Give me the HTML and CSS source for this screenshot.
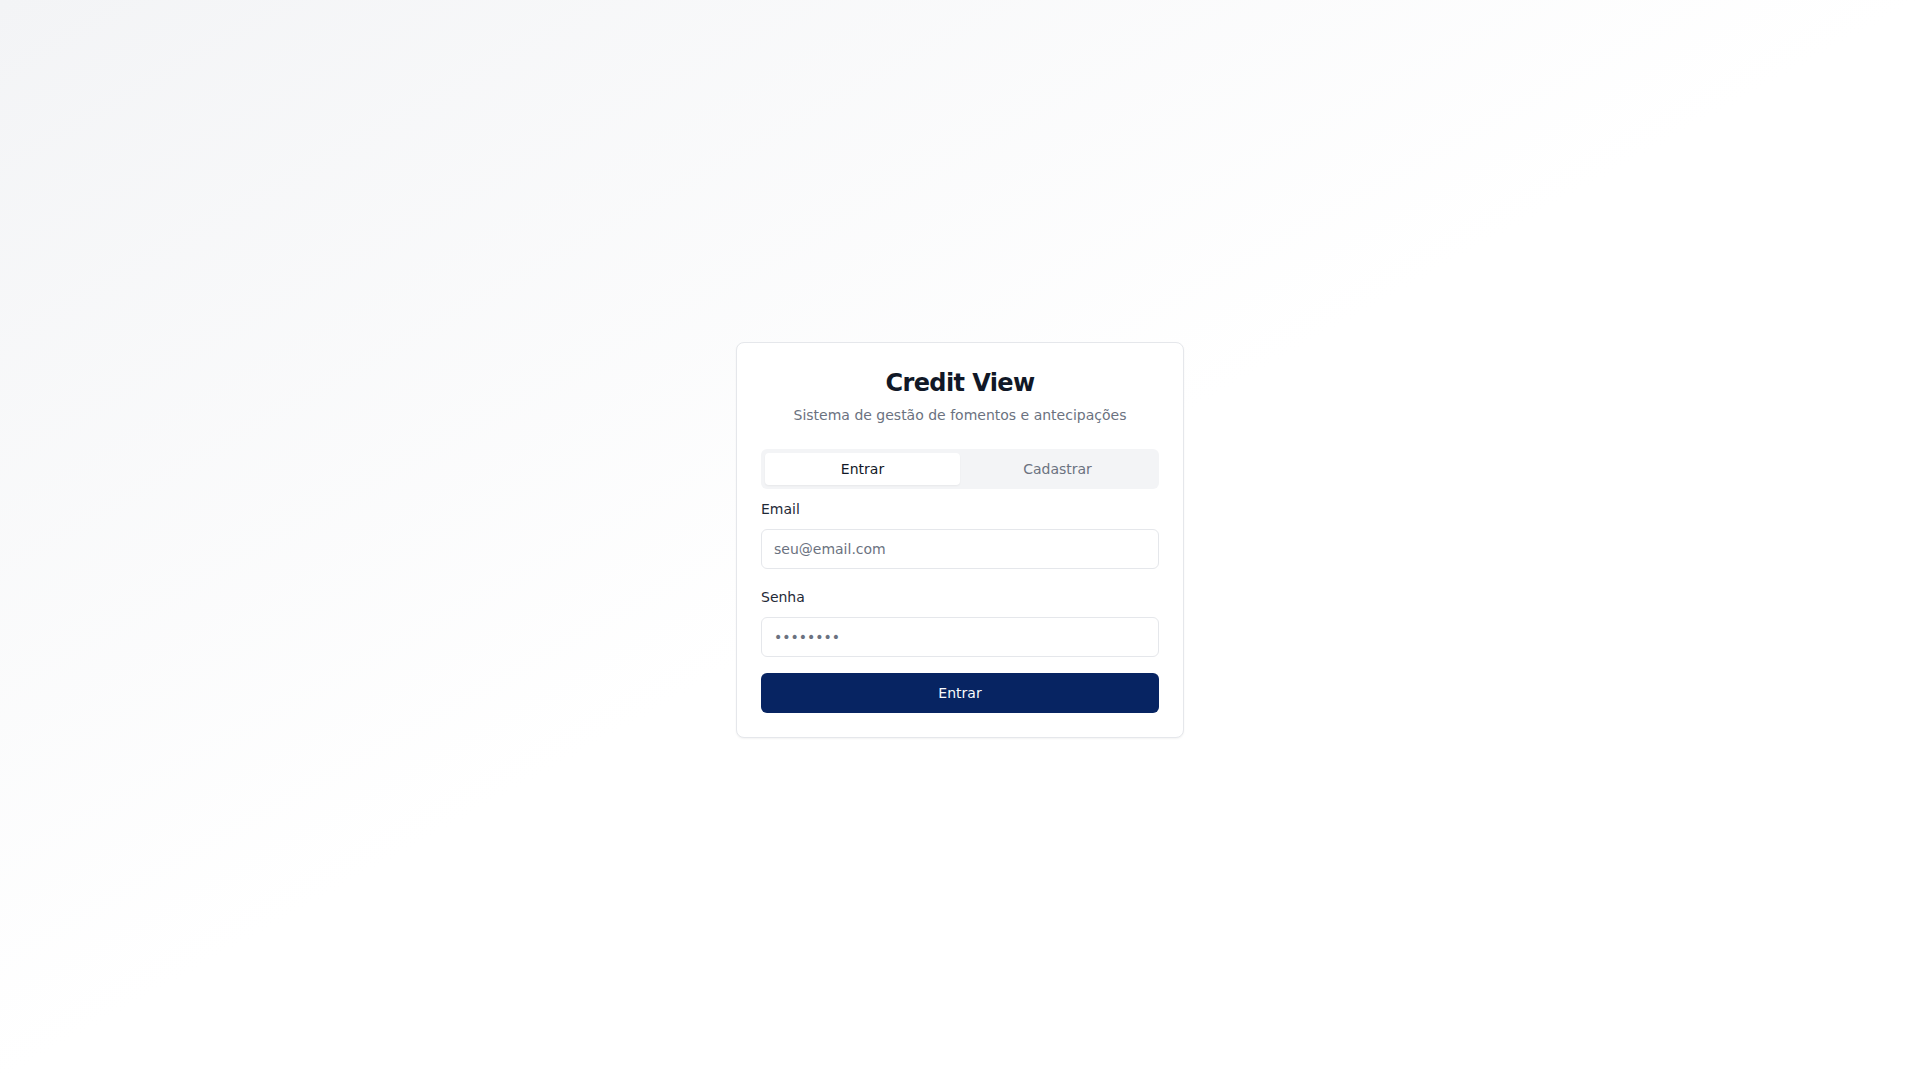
FILE: index.html
```html
<!DOCTYPE html>
<html lang="pt-BR">
<head>
<meta charset="utf-8">
<title>Credit View</title>
<link rel="stylesheet" href="styles.css">
</head>
<body>
<main class="page">
  <div class="card">
    <div class="card-header">
      <h1 class="title">Credit View</h1>
      <p class="subtitle">Sistema de gestão de fomentos e antecipações</p>
    </div>
    <div class="card-content">
      <div class="tabs">
        <button class="tab tab-active" type="button">Entrar</button>
        <button class="tab" type="button">Cadastrar</button>
      </div>
      <form class="form">
        <div class="field">
          <label for="email">Email</label>
          <input id="email" class="input" type="email" placeholder="seu@email.com">
        </div>
        <div class="field">
          <label for="senha">Senha</label>
          <input id="senha" class="input" type="password" placeholder="••••••••">
        </div>
        <button class="submit" type="button">Entrar</button>
      </form>
    </div>
  </div>
</main>
</body>
</html>
```
FILE: styles.css
```css
* {
  box-sizing: border-box;
}

html, body {
  margin: 0;
  padding: 0;
}

body {
  font-family: "DejaVu Sans", "Noto Sans", sans-serif;
  font-size: 16px;
  line-height: 1.5;
  color: #111827;
}

.page {
  min-height: 100vh;
  display: flex;
  align-items: center;
  justify-content: center;
  background: linear-gradient(to bottom right, #f3f4f6 0%, #ffffff 50%, #ffffff 100%);
}

.card {
  width: 448px;
  background: #ffffff;
  border: 1px solid #e5e7eb;
  border-radius: 8px;
  box-shadow: 0 1px 2px 0 rgba(0, 0, 0, 0.05);
}

.card-header {
  padding: 24px;
  display: flex;
  flex-direction: column;
  gap: 6px;
  text-align: center;
}

.title {
  margin: 0;
  font-size: 24px;
  line-height: 32px;
  font-weight: 700;
  color: #111827;
  letter-spacing: -0.025em;
}

.subtitle {
  margin: 0;
  font-size: 14px;
  line-height: 20px;
  color: #6b7280;
}

.card-content {
  padding: 0 24px 24px;
}

.tabs {
  display: grid;
  grid-template-columns: 1fr 1fr;
  height: 40px;
  padding: 4px;
  background: #f3f4f6;
  border-radius: 6px;
}

.tab {
  font-family: inherit;
  font-size: 14px;
  line-height: 20px;
  font-weight: 500;
  border: 0;
  background: transparent;
  color: #6b7280;
  border-radius: 4px;
  padding: 6px 12px;
  cursor: pointer;
}

.tab-active {
  background: #ffffff;
  color: #111827;
  box-shadow: 0 1px 2px 0 rgba(0, 0, 0, 0.05);
}

.form {
  margin-top: 8px;
  display: flex;
  flex-direction: column;
  gap: 16px;
}

.field {
  display: flex;
  flex-direction: column;
  gap: 8px;
}

.field label {
  font-size: 14px;
  line-height: 24px;
  font-weight: 500;
  color: #1f2937;
}

.input {
  height: 40px;
  width: 100%;
  border: 1px solid #e5e7eb;
  border-radius: 6px;
  background: #ffffff;
  padding: 8px 12px;
  font-family: inherit;
  font-size: 14px;
  line-height: 20px;
  color: #111827;
  outline: none;
}

.input::placeholder {
  color: #6b7280;
}

.submit {
  height: 40px;
  width: 100%;
  border: 0;
  border-radius: 6px;
  background: #072462;
  color: #f8fafc;
  font-family: inherit;
  font-size: 14px;
  line-height: 20px;
  font-weight: 500;
  cursor: pointer;
}
```
